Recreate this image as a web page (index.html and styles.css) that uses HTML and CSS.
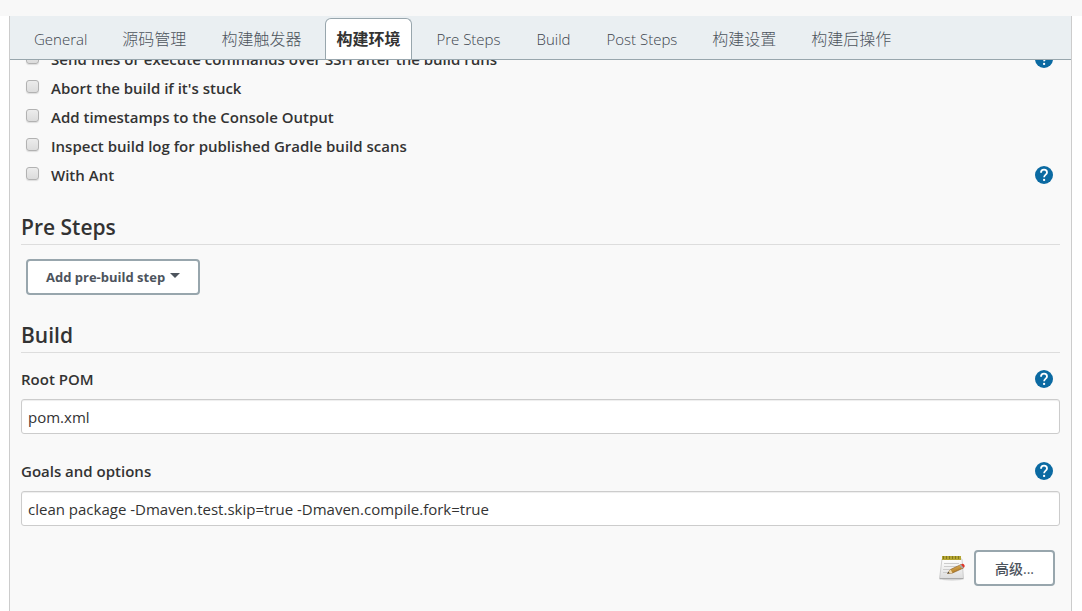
FILE: index.html
```html
<!DOCTYPE html>
<html lang="zh-CN">
<head>
<meta charset="utf-8">
<title>构建环境</title>
<link rel="stylesheet" href="styles.css">
</head>
<body>
<svg class="sprite" aria-hidden="true">
  <symbol id="help" viewBox="0 0 18 18">
    <circle cx="9" cy="9" r="9" fill="#0b6aa2"/>
    <path d="M6 6.700C6 4.700 7.300 3.700 9 3.700s3 1.100 3 2.700c0 2.200-2.900 2.300-2.900 4.900" fill="none" stroke="#fff" stroke-width="1.800"/>
    <rect x="8.100" y="12.900" width="2" height="2" fill="#fff"/>
  </symbol>
</svg>
<div class="topbar"></div>
<div class="panel">
  <nav class="tabs">
    <a class="tab latin" href="#general">General</a>
    <a class="tab" href="#scm">源码管理</a>
    <a class="tab" href="#triggers">构建触发器</a>
    <a class="tab active" href="#env">构建环境</a>
    <a class="tab latin" href="#pre">Pre Steps</a>
    <a class="tab latin" href="#build">Build</a>
    <a class="tab latin" href="#post">Post Steps</a>
    <a class="tab" href="#settings">构建设置</a>
    <a class="tab" href="#actions">构建后操作</a>
  </nav>
  <main class="viewport">
    <form class="config">
      <div class="options" id="env">
        <div class="option"><input class="check" type="checkbox" id="o1"><label for="o1">Send files or execute commands over SSH after the build runs</label><button class="help" type="button" aria-label="Help"><svg><use href="#help"/></svg></button></div>
        <div class="option"><input class="check" type="checkbox" id="o2"><label for="o2">Abort the build if it's stuck</label></div>
        <div class="option"><input class="check" type="checkbox" id="o3"><label for="o3">Add timestamps to the Console Output</label></div>
        <div class="option"><input class="check" type="checkbox" id="o4"><label for="o4">Inspect build log for published Gradle build scans</label></div>
        <div class="option"><input class="check" type="checkbox" id="o5"><label for="o5">With Ant</label><button class="help" type="button" aria-label="Help"><svg><use href="#help"/></svg></button></div>
      </div>
      <h2 class="heading" id="pre">Pre Steps</h2>
      <div class="step">
        <button class="btn" type="button">Add pre-build step<span class="caret"></span></button>
      </div>
      <h2 class="heading" id="build">Build</h2>
      <div class="field">
        <div class="field-head"><label for="pom">Root POM</label><button class="help" type="button" aria-label="Help"><svg><use href="#help"/></svg></button></div>
        <input class="text" type="text" id="pom" value="pom.xml">
      </div>
      <div class="field">
        <div class="field-head"><label for="goals">Goals and options</label><button class="help" type="button" aria-label="Help"><svg><use href="#help"/></svg></button></div>
        <input class="text" type="text" id="goals" value="clean package -Dmaven.test.skip=true -Dmaven.compile.fork=true">
      </div>
      <div class="advanced">
        <svg class="notepad" viewBox="0 0 26 26" aria-hidden="true">
          <defs>
            <linearGradient id="paper" x1="0" y1="0" x2="0" y2="1"><stop offset="0" stop-color="#fff"/><stop offset="1" stop-color="#dcdcdc"/></linearGradient>
            <linearGradient id="wood" x1="0" y1="0" x2="0.500" y2="1"><stop offset="0" stop-color="#f3cb72"/><stop offset="1" stop-color="#a8701b"/></linearGradient>
          </defs>
          <ellipse cx="13" cy="24.500" rx="10" ry="1.200" fill="#ddd"/>
          <path d="M3 4h20l1.500 20h-24z" fill="url(#paper)" stroke="#c4c4c4" stroke-width=".8"/>
          <path d="M1 23.500h23" stroke="#aaa"/>
          <path d="M3 1h19v4H3z" fill="#b5a632"/>
          <path d="M4.500 1v3M7.500 1v3M10.500 1v3M13.500 1v3M16.500 1v3M19.500 1v3" stroke="#82781f"/>
          <path d="M5 8.500h15M5 11.500h13M4 14.500h9M4 17.500h5" stroke="#ccc"/>
          <path d="M8.500 18.500l3-4L22 9.500l2.500 3.500-11 5z" fill="url(#wood)" stroke="#87591d" stroke-width=".6"/>
          <path d="M8.500 18.500l3-4 2 3.500z" fill="#efd8a9"/>
          <path d="M8.300 18.600l1.300-1.800 1 1.400z" fill="#333"/>
          <path d="M20.500 10.200l2-1 2.300 3.400-2 1z" fill="#aaa"/>
          <path d="M22 9.500q2-1.500 3.200.2t-.5 3.100z" fill="#df3427"/>
        </svg>
        <button class="btn btn-cjk" type="button">高级...</button>
      </div>
    </form>
  </main>
</div>
</body>
</html>
```
FILE: styles.css
```css
* { box-sizing: border-box; }
body {
  margin: 0;
  height: 100vh;
  display: flex;
  flex-direction: column;
  overflow: hidden;
  background: #fff;
  color: #333;
  font-family: "Open Sans", "Noto Sans CJK SC", sans-serif;
  font-size: 15px;
}
.sprite { display: none; }
.topbar { flex: 0 0 16px; background: #f8f8f8; }
.panel {
  flex: 1;
  min-height: 0;
  display: flex;
  flex-direction: column;
  margin: 0 10px 0 9px;
  border: solid #ccc;
  border-width: 0 1px;
  background: #f9f9f9;
}
.tabs {
  display: flex;
  flex: 0 0 44px;
  padding: 2px 6px 0;
  background: #eaeff2;
  border-bottom: 1px solid #98a6ad;
}
.tab {
  margin: 0 6px;
  padding: 0 11px 0 10px;
  border: 1px solid transparent;
  border-bottom: 0;
  border-radius: 6px 6px 0 0;
  color: #4d545d;
  font-size: 16px;
  font-weight: 300;
  line-height: 40px;
  text-decoration: none;
  white-space: nowrap;
}
.latin {
  padding: 0 11px;
  color: #3c434c;
  font-size: 15px;
}
.active {
  border-color: #98a6ad;
  background: #fff;
  color: #333;
  font-weight: 700;
}
.viewport { flex: 1; min-height: 0; overflow: hidden; }
.config { padding: 0 11px; }
.options { margin-top: -16px; }
.option {
  display: flex;
  align-items: center;
  height: 29px;
  padding: 0 7px 0 5px;
  font-weight: 600;
}
.check {
  appearance: none;
  width: 13px;
  height: 13px;
  margin: 0 12px 3px 0;
  border: 1px solid #b2b2b2;
  border-radius: 3px;
  background: linear-gradient(#ececec, #dcdcdc);
  box-shadow: 0 1px 1px #ddd;
}
.help {
  width: 18px;
  height: 18px;
  margin-left: auto;
  padding: 0;
  border: 0;
  background: none;
}
.help svg { display: block; width: 18px; height: 18px; }
.heading {
  margin: 22px 0 0;
  padding-bottom: 1px;
  border-bottom: 1px solid #ddd;
  font-size: 21px;
  font-weight: 600;
  line-height: 32px;
}
.step { padding: 14px 5px 2px; }
.btn {
  height: 36px;
  padding: 0 18px;
  border: 2px solid #98a6ad;
  border-radius: 4px;
  background: #fff;
  color: #4d545d;
  font-family: inherit;
  font-size: 13px;
  font-weight: 700;
}
.caret {
  display: inline-block;
  margin-left: 5px;
  border: solid transparent;
  border-width: 5px 5px 0;
  border-top-color: #4d545d;
  vertical-align: 4px;
}
.field { margin-bottom: 17px; }
.field-head {
  display: flex;
  align-items: center;
  height: 40px;
  padding-right: 7px;
  font-weight: 600;
}
.heading + .field { margin-top: 6px; }
.text {
  display: block;
  width: 100%;
  height: 35px;
  padding: 0 6px;
  border: 1px solid #ccc;
  border-radius: 3px;
  background: #fff;
  box-shadow: inset 0 1px 1px #eee;
  color: #333;
  font: inherit;
}
.advanced {
  display: flex;
  justify-content: flex-end;
  align-items: center;
  gap: 9px;
  padding: 7px 5px 0 0;
}
.notepad { width: 26px; height: 26px; }
.btn-cjk { padding: 0 19px; font-size: 14px; font-weight: 500; }
```
